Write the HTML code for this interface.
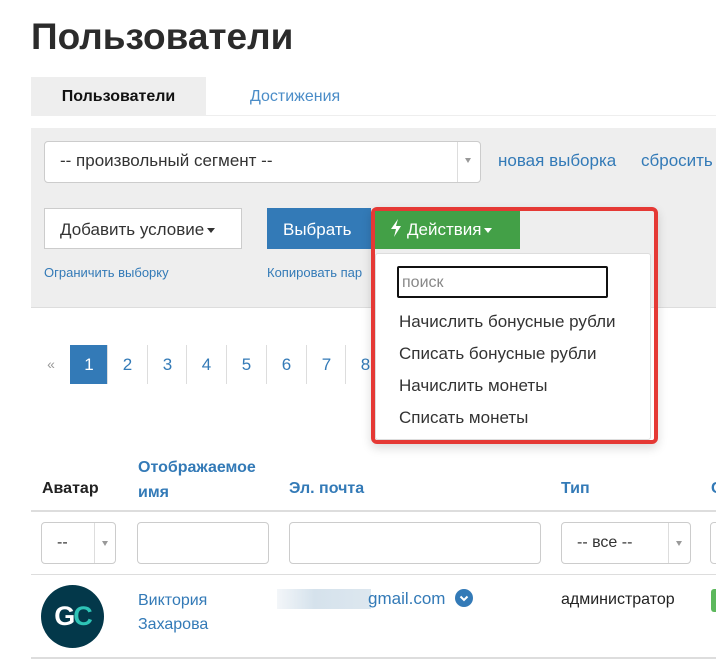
<!DOCTYPE html>
<html><head><meta charset="utf-8"><style>
*{box-sizing:border-box;margin:0;padding:0}
body{width:716px;height:659px;overflow:hidden;background:#fff;font-family:"Liberation Sans","DejaVu Sans",sans-serif;color:#333;position:relative}
.a{position:absolute;white-space:nowrap}
.blue{color:#337ab7}
.inp{position:absolute;background:#fff;border:1px solid #ccc;border-radius:4px}
.caret{display:inline-block;border-left:4px solid transparent;border-right:4px solid transparent;border-top:5px solid currentColor;vertical-align:middle;margin-left:3px}
.pg{position:absolute;top:345px;height:39px;width:40px;border-left:1px solid #ddd;color:#337ab7;font-size:17px;text-align:center;line-height:39px}
.tri{position:absolute;border-left:3px solid transparent;border-right:3px solid transparent;border-top:5px solid #999}
</style></head><body>
<div class="a" style="left:31px;top:16px;font-size:37px;font-weight:bold;color:#2b2b2b">Пользователи</div>
<div class="a" style="left:31px;top:77px;width:175px;height:38px;background:#eee;font-weight:bold;font-size:16px;line-height:40px;text-align:center;color:#111">Пользователи</div>
<div class="a blue" style="left:250px;top:77px;font-size:16px;line-height:40px;color:#4a8cc7">Достижения</div>
<div class="a" style="left:31px;top:115px;width:685px;height:1px;background:#eee"></div>
<div class="a" style="left:31px;top:128px;width:685px;height:180px;background:#eee;border-bottom:1px solid #ddd"></div>

<div class="inp" style="left:44px;top:141px;width:437px;height:42px"></div>
<div class="a" style="left:60px;top:151px;font-size:17px;color:#333">-- произвольный сегмент --</div>
<div class="a" style="left:457px;top:142px;width:1px;height:40px;background:#ddd"></div>
<div class="tri" style="left:465px;top:158px"></div>
<div class="a blue" style="left:498px;top:151px;font-size:17px">новая выборка</div>
<div class="a blue" style="left:641px;top:151px;font-size:17px">сбросить</div>

<div class="a" style="left:44px;top:208px;width:198px;height:41px;background:#fff;border:1px solid #ccc;font-size:17px;line-height:41px;padding-left:15px;color:#333">Добавить условие<span class="caret"></span></div>
<div class="a" style="left:267px;top:208px;width:104px;height:41px;background:#337ab7;color:#fff;font-size:17px;line-height:43px;padding-left:16px">Выбрать</div>
<div class="a blue" style="left:44px;top:265px;font-size:13px">Ограничить выборку</div>
<div class="a blue" style="left:267px;top:265px;font-size:13px">Копировать пар</div>

<div class="pg" style="left:31px;border:none;color:#999;font-size:14px">«</div>
<div class="pg" style="left:70px;width:38px;background:#337ab7;color:#fff;border:none">1</div>
<div class="pg" style="left:107px">2</div>
<div class="pg" style="left:147px">3</div>
<div class="pg" style="left:186px">4</div>
<div class="pg" style="left:226px">5</div>
<div class="pg" style="left:266px">6</div>
<div class="pg" style="left:306px">7</div>
<div class="pg" style="left:345px">8</div>

<div class="a" style="left:371px;top:207px;width:287px;height:237px;border:4px solid #e53935;border-radius:6px;box-shadow:0 4px 10px rgba(0,0,0,.15)"></div>
<div class="a" style="left:375px;top:211px;width:145px;height:38px;background:#43a047;color:#fff;font-size:17px;line-height:38px;padding-left:15px"><svg width="12" height="18" viewBox="0 0 12 18" style="vertical-align:-2px;margin-right:5px"><path d="M8 0 L1 10 H6 L4 18 L11 7 H6 Z" fill="#fff"/></svg>Действия<span class="caret"></span></div>
<div class="a" style="left:375px;top:253px;width:276px;height:187px;background:#fff;border:1px solid #ddd;border-radius:3px"></div>
<div class="a" style="left:397px;top:266px;width:211px;height:32px;border:2px solid #111;border-radius:2px;font-size:16px;line-height:30px;padding-left:3px;color:#888">поиск</div>
<div class="a" style="left:399px;top:312px;font-size:17px">Начислить бонусные рубли</div>
<div class="a" style="left:399px;top:344px;font-size:17px">Списать бонусные рубли</div>
<div class="a" style="left:399px;top:376px;font-size:17px">Начислить монеты</div>
<div class="a" style="left:399px;top:408px;font-size:17px">Списать монеты</div>

<div class="a" style="left:42px;top:480px;font-size:16px;font-weight:bold;color:#222">Аватар</div>
<div class="a blue" style="left:138px;top:455px;font-size:16px;font-weight:bold;line-height:25px">Отображаемое<br>имя</div>
<div class="a blue" style="left:289px;top:480px;font-size:16px;font-weight:bold">Эл. почта</div>
<div class="a blue" style="left:561px;top:480px;font-size:16px;font-weight:bold">Тип</div>
<div class="a blue" style="left:711px;top:480px;font-size:16px;font-weight:bold">С</div>
<div class="a" style="left:31px;top:510px;width:685px;height:2px;background:#ddd"></div>

<div class="inp" style="left:41px;top:522px;width:75px;height:42px"></div>
<div class="a" style="left:57px;top:534px;font-size:16px">--</div>
<div class="a" style="left:94px;top:523px;width:1px;height:40px;background:#ddd"></div>
<div class="tri" style="left:102px;top:541px"></div>
<div class="inp" style="left:137px;top:522px;width:132px;height:42px"></div>
<div class="inp" style="left:289px;top:522px;width:252px;height:42px"></div>
<div class="inp" style="left:561px;top:522px;width:130px;height:42px"></div>
<div class="a" style="left:577px;top:534px;font-size:16px">-- все --</div>
<div class="a" style="left:668px;top:523px;width:1px;height:40px;background:#ddd"></div>
<div class="tri" style="left:676px;top:541px"></div>
<div class="inp" style="left:710px;top:522px;width:20px;height:42px"></div>
<div class="a" style="left:31px;top:574px;width:685px;height:1px;background:#ddd"></div>

<div class="a" style="left:41px;top:585px;width:63px;height:63px;border-radius:50%;background:#03384a;color:#fff;font-weight:bold;font-size:27px;line-height:63px;text-align:center;letter-spacing:-2px">G<span style="color:#2ec4b6">C</span></div>
<div class="a blue" style="left:138px;top:589px;font-size:16px;line-height:24px">Виктория<br>Захарова</div>
<div class="a" style="left:277px;top:589px;width:94px;height:20px;background:linear-gradient(90deg,#f3f6f9,#d5e2ec 40%,#dde7ef)"></div>
<div class="a blue" style="left:368px;top:588px;font-size:17px;line-height:22px">gmail.com</div>
<div class="a" style="left:455px;top:589px;width:18px;height:18px;border-radius:50%;background:#337ab7"><svg width="18" height="18"><path d="M5.5 7.5 L9 11 L12.5 7.5" stroke="#fff" stroke-width="2" fill="none"/></svg></div>
<div class="a" style="left:561px;top:589px;font-size:16px;line-height:22px;color:#222">администратор</div>
<div class="a" style="left:711px;top:589px;width:10px;height:23px;background:#5cb85c;border-radius:3px"></div>
<div class="a" style="left:31px;top:657px;width:685px;height:2px;background:#ddd"></div>
</body></html>
